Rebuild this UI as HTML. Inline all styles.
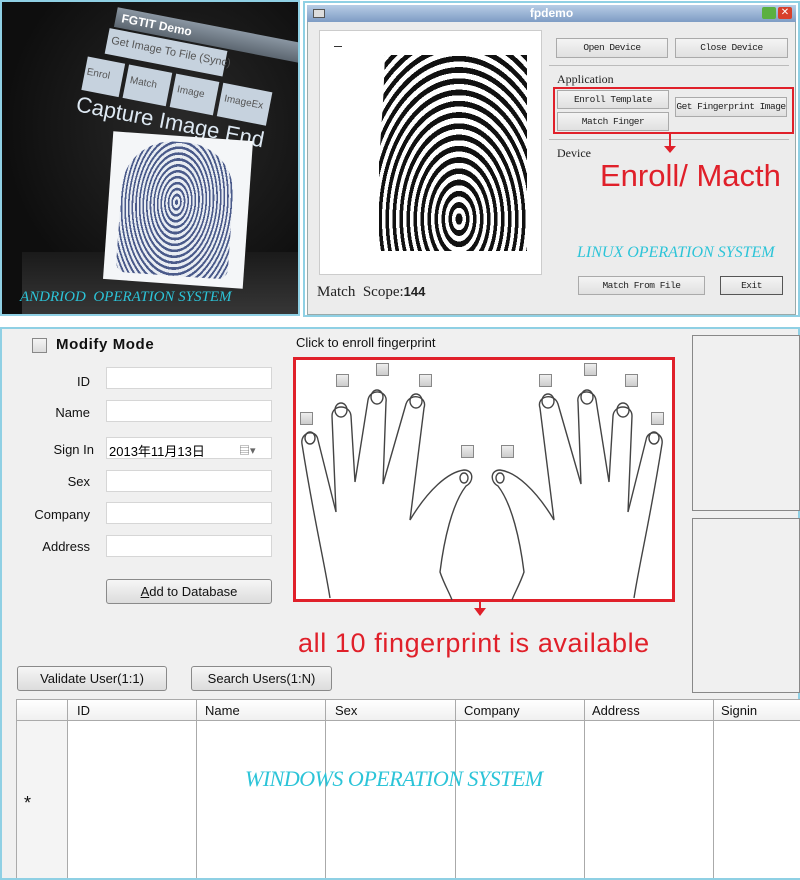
<!DOCTYPE html>
<html><head><meta charset="utf-8"><style>
*{margin:0;padding:0;box-sizing:border-box}
body{width:800px;height:880px;background:#fff;position:relative;overflow:hidden;font-family:"Liberation Sans","Noto Sans CJK SC",sans-serif}
.a{position:absolute}
.btn{position:absolute;border:1px solid #8a8a8a;border-radius:3px;background:linear-gradient(#f6f6f6,#dcdcdc);font-size:13px;color:#111;text-align:center}
.lbtn{position:absolute;border:1px solid #aaa;background:linear-gradient(#f4f4f4,#e0e0e0);font-family:"Liberation Mono",monospace;font-size:9.5px;color:#222;text-align:center;letter-spacing:-0.5px;white-space:nowrap}
.inp{position:absolute;left:106px;width:166px;height:22px;background:#fff;border:1px solid #d6d6d6}
.lbl{position:absolute;width:90px;left:0;text-align:right;font-size:13px;color:#111}
.cyan{color:#2cc4d8;font-family:"Liberation Serif",serif;font-style:italic}
.col{position:absolute;top:699px;bottom:2px;border-left:1px solid #aaa}
.hd{position:absolute;top:703px;font-size:13px;color:#111}
.cb{position:absolute;width:13px;height:13px;border:1px solid #888;background:linear-gradient(#eee,#ccc)}
</style></head><body>

<!-- Android panel -->
<div class="a" style="left:0;top:0;width:300px;height:316px;border:2px solid #8fd0e4;background:radial-gradient(ellipse at 60% 40%,#2a2a2a,#0e0e0e 70%);overflow:hidden">
 <div class="a" style="left:20px;top:250px;width:280px;height:70px;background:linear-gradient(#1a1a1a,#3a3a3a)"></div>
 <div class="a" style="left:100px;top:-8px;width:240px;height:320px;transform:rotate(11deg);transform-origin:0 0">
  <div class="a" style="left:18px;top:10px;width:230px;height:20px;background:linear-gradient(#8a96a2,#5c6670);color:#fff;font-weight:bold;font-size:12px;padding:3px 6px">FGTIT Demo</div>
  <div class="a" style="left:14px;top:32px;width:120px;height:26px;background:#c6d2de;color:#555;font-size:11px;padding:6px 4px;white-space:nowrap">Get Image To File (Sync)</div>
  <div class="a" style="left:-2px;top:64px;width:38px;height:34px;background:#c6d2de;color:#555;font-size:10px;padding:10px 2px">Enrol</div>
  <div class="a" style="left:40px;top:64px;width:44px;height:34px;background:#c6d2de;color:#555;font-size:10px;padding:10px 4px">Match</div>
  <div class="a" style="left:88px;top:64px;width:44px;height:34px;background:#c6d2de;color:#555;font-size:10px;padding:10px 4px">Image</div>
  <div class="a" style="left:136px;top:64px;width:50px;height:34px;background:#c6d2de;color:#555;font-size:10px;padding:10px 4px">ImageEx</div>
  <div class="a" style="left:-4px;top:100px;color:#dde8f2;font-size:22px;white-space:nowrap">Capture Image End</div>
 </div>
 <div class="a" style="left:106px;top:134px;width:140px;height:148px;background:#f4f6f8;transform:rotate(4deg)">
  <div class="a" style="left:12px;top:6px;width:112px;height:134px;border-radius:50px 50px 10px 10px;background:repeating-radial-gradient(ellipse 40% 55% at 50% 45%,#4a5a8a 0 1.6px,#e8ecf2 1.6px 3.6px)"></div>
 </div>
 <div class="a cyan" style="left:18px;top:287px;font-size:15px;white-space:nowrap">ANDRIOD&nbsp; OPERATION SYSTEM</div>
</div>

<!-- Linux panel -->
<div class="a" style="left:303px;top:1px;width:497px;height:316px;border:2px solid #8fd0e4;background:#fff">
 <div class="a" style="left:2px;top:2px;width:489px;height:310px;background:#ececec;border:1px solid #9aa"></div>
 <div class="a" style="left:2px;top:2px;width:489px;height:17px;background:linear-gradient(#b8cde6,#7e9cc4);color:#fff;font-size:12px;text-align:center;font-weight:bold;line-height:17px">fpdemo</div>
 <div class="a" style="left:8px;top:6px;width:12px;height:9px;border:1px solid #555;background:#ddd"></div>
 <div class="a" style="left:457px;top:4px;width:14px;height:12px;background:#5bb040;border-radius:2px"></div>
 <div class="a" style="left:473px;top:4px;width:14px;height:12px;background:#d8402c;border-radius:2px;color:#fff;font-size:10px;text-align:center;line-height:12px">✕</div>
 <div class="a" style="left:14px;top:27px;width:223px;height:245px;background:#fff;border:1px solid #ccc"></div>
 <div class="a" style="left:29px;top:43px;width:8px;height:1px;background:#333"></div>
 <div class="a" style="left:74px;top:52px;width:148px;height:196px;overflow:hidden;clip-path:polygon(4% 0,100% 0,100% 100%,0 100%,0 55%,3% 20%)">
  <div class="a" style="left:-60px;top:-40px;width:280px;height:300px;background:repeating-radial-gradient(ellipse 40% 60% at 50% 68%,#111 0 3.5px,#fff 3.5px 7px)"></div>
 </div>
 <div class="lbtn" style="left:251px;top:35px;width:112px;height:20px;line-height:18px">Open Device</div>
 <div class="lbtn" style="left:370px;top:35px;width:113px;height:20px;line-height:18px">Close Device</div>
 <div class="a" style="left:244px;top:62px;width:240px;border-top:1px solid #bbb"></div>
 <div class="a" style="left:252px;top:69px;font-family:'Liberation Serif',serif;font-size:12px;color:#222">Application</div>
 <div class="lbtn" style="left:252px;top:87px;width:112px;height:19px;line-height:17px">Enroll Template</div>
 <div class="lbtn" style="left:252px;top:109px;width:112px;height:19px;line-height:17px">Match Finger</div>
 <div class="lbtn" style="left:370px;top:94px;width:112px;height:20px;line-height:18px">Get Fingerprint Image</div>
 <div class="a" style="left:248px;top:84px;width:241px;height:47px;border:2px solid #e0202a"></div>
 <div class="a" style="left:244px;top:136px;width:240px;border-top:1px solid #bbb"></div>
 <div class="a" style="left:364px;top:131px;width:2px;height:14px;background:#e0202a"></div>
 <div class="a" style="left:359px;top:143px;border-left:6px solid transparent;border-right:6px solid transparent;border-top:7px solid #e0202a"></div>
 <div class="a" style="left:252px;top:143px;font-family:'Liberation Serif',serif;font-size:12px;color:#222">Device</div>
 <div class="a" style="left:295px;top:155px;font-size:31px;color:#e0202a;white-space:nowrap">Enroll/ Macth</div>
 <div class="a cyan" style="left:272px;top:241px;font-size:16px;white-space:nowrap">LINUX OPERATION SYSTEM</div>
 <div class="lbtn" style="left:273px;top:273px;width:127px;height:19px;line-height:17px">Match From File</div>
 <div class="lbtn" style="left:415px;top:273px;width:63px;height:19px;line-height:17px;border-color:#555">Exit</div>
 <div class="a" style="left:12px;top:281px;font-family:'Liberation Serif',serif;font-size:15px;color:#222;white-space:nowrap">Match&nbsp; Scope:<b style="font-family:'Liberation Sans';font-size:13px">144</b></div>
</div>

<!-- Windows panel -->
<div class="a" style="left:0;top:327px;width:800px;height:553px;border:2px solid #8fd0e4;background:#f0f0f0"></div>
<div class="cb" style="left:32px;top:338px;width:15px;height:15px;background:linear-gradient(#f4f4f4,#dcdcdc)"></div>
<div class="a" style="left:56px;top:336px;font-weight:bold;font-size:15px;color:#111;letter-spacing:0.6px">Modify Mode</div>
<div class="lbl" style="top:374px">ID</div><div class="inp" style="top:367px"></div>
<div class="lbl" style="top:405px">Name</div><div class="inp" style="top:400px"></div>
<div class="lbl" style="top:442px;left:4px">Sign In</div><div class="inp" style="top:437px;font-size:13px;padding:3px 2px">2013年11月13日<span class="a" style="left:132px;top:4px;font-size:11px;color:#666">▤▾</span></div>
<div class="lbl" style="top:474px">Sex</div><div class="inp" style="top:470px"></div>
<div class="lbl" style="top:507px">Company</div><div class="inp" style="top:502px"></div>
<div class="lbl" style="top:539px">Address</div><div class="inp" style="top:535px"></div>
<div class="btn" style="left:106px;top:579px;width:166px;height:25px;line-height:23px"><u>A</u>dd to Database</div>
<div class="btn" style="left:17px;top:666px;width:150px;height:25px;line-height:23px">Validate User(1:1)</div>
<div class="btn" style="left:191px;top:666px;width:141px;height:25px;line-height:23px">Search Users(1:N)</div>

<div class="a" style="left:296px;top:335px;font-size:13px;color:#111">Click to enroll fingerprint</div>
<div class="a" style="left:293px;top:357px;width:382px;height:245px;border:3px solid #e0202a;background:#fff"></div>
<svg class="a" style="left:0;top:0" width="800" height="880" fill="none" stroke="#444" stroke-width="1.4">
 <g id="lh">
  <path d="M330,598 C324,560 314,520 302,444 C300,432 316,428 318,440 L336,512 L332,416 C332,404 350,404 351,416 L355,482 L368,400 C370,388 388,390 386,402 L383,484 L406,404 C410,392 428,396 424,408 L410,520 C428,490 448,472 464,470 C474,470 474,482 466,486 C452,504 444,540 440,572 C444,584 450,594 452,600"/>
  <ellipse cx="310" cy="438" rx="5" ry="6"/><ellipse cx="341" cy="410" rx="6" ry="7"/><ellipse cx="377" cy="397" rx="6" ry="7"/><ellipse cx="416" cy="401" rx="6" ry="7"/><ellipse cx="464" cy="478" rx="4" ry="5"/>
 </g>
 <g transform="translate(964,0) scale(-1,1)">
  <path d="M330,598 C324,560 314,520 302,444 C300,432 316,428 318,440 L336,512 L332,416 C332,404 350,404 351,416 L355,482 L368,400 C370,388 388,390 386,402 L383,484 L406,404 C410,392 428,396 424,408 L410,520 C428,490 448,472 464,470 C474,470 474,482 466,486 C452,504 444,540 440,572 C444,584 450,594 452,600"/>
  <ellipse cx="310" cy="438" rx="5" ry="6"/><ellipse cx="341" cy="410" rx="6" ry="7"/><ellipse cx="377" cy="397" rx="6" ry="7"/><ellipse cx="416" cy="401" rx="6" ry="7"/><ellipse cx="464" cy="478" rx="4" ry="5"/>
 </g>
</svg>
<div class="cb" style="left:300px;top:412px"></div><div class="cb" style="left:336px;top:374px"></div><div class="cb" style="left:376px;top:363px"></div><div class="cb" style="left:419px;top:374px"></div><div class="cb" style="left:461px;top:445px"></div>
<div class="cb" style="left:501px;top:445px"></div><div class="cb" style="left:539px;top:374px"></div><div class="cb" style="left:584px;top:363px"></div><div class="cb" style="left:625px;top:374px"></div><div class="cb" style="left:651px;top:412px"></div>
<div class="a" style="left:479px;top:602px;width:2px;height:8px;background:#e0202a"></div>
<div class="a" style="left:474px;top:608px;border-left:6px solid transparent;border-right:6px solid transparent;border-top:8px solid #e0202a"></div>
<div class="a" style="left:298px;top:628px;font-size:27px;color:#e0202a;white-space:nowrap;letter-spacing:0.6px">all 10 fingerprint is available</div>

<div class="a" style="left:692px;top:335px;width:108px;height:176px;border:1px solid #888;background:#f0f0f0"></div>
<div class="a" style="left:692px;top:518px;width:108px;height:175px;border:1px solid #888;background:#f0f0f0"></div>

<div class="a" style="left:16px;top:699px;width:784px;height:179px;background:#fff;border-top:1px solid #aaa;border-left:1px solid #aaa"></div>
<div class="a" style="left:17px;top:700px;width:783px;height:21px;background:linear-gradient(#fff,#f0f0f0);border-bottom:1px solid #aaa"></div>
<div class="a" style="left:17px;top:721px;width:50px;height:157px;background:#f4f4f4"></div>
<div class="col" style="left:67px"></div><div class="col" style="left:196px"></div><div class="col" style="left:325px"></div><div class="col" style="left:455px"></div><div class="col" style="left:584px"></div><div class="col" style="left:713px"></div>
<div class="hd" style="left:77px">ID</div><div class="hd" style="left:205px">Name</div><div class="hd" style="left:335px">Sex</div><div class="hd" style="left:464px">Company</div><div class="hd" style="left:592px">Address</div><div class="hd" style="left:721px">Signin</div>
<div class="a" style="left:24px;top:793px;font-size:18px;color:#111">*</div>
<div class="a cyan" style="left:245px;top:766px;font-size:22px;white-space:nowrap;letter-spacing:-0.5px">WINDOWS OPERATION SYSTEM</div>
</body></html>
